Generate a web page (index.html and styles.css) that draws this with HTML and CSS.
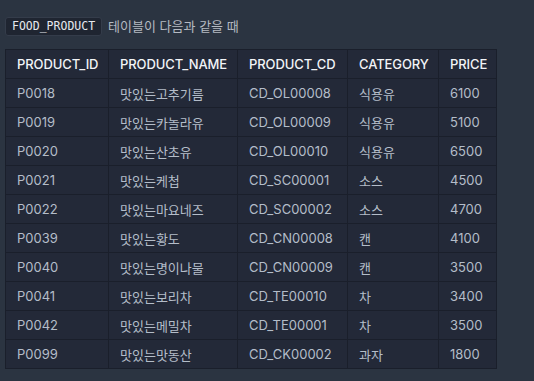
FILE: index.html
```html
<!DOCTYPE html>
<html lang="ko">
<head>
<meta charset="utf-8">
<link rel="stylesheet" href="styles.css">
</head>
<body>
<div class="page">
  <p class="intro"><code class="chip">FOOD_PRODUCT</code> 테이블이 다음과 같을 때</p>
  <table class="grid">
    <colgroup>
      <col class="c-id"><col class="c-name"><col class="c-cd"><col class="c-cat"><col class="c-price">
    </colgroup>
    <thead>
      <tr><th>PRODUCT_ID</th><th>PRODUCT_NAME</th><th>PRODUCT_CD</th><th>CATEGORY</th><th>PRICE</th></tr>
    </thead>
    <tbody>
      <tr><td>P0018</td><td>맛있는고추기름</td><td>CD_OL00008</td><td>식용유</td><td>6100</td></tr>
      <tr><td>P0019</td><td>맛있는카놀라유</td><td>CD_OL00009</td><td>식용유</td><td>5100</td></tr>
      <tr><td>P0020</td><td>맛있는산초유</td><td>CD_OL00010</td><td>식용유</td><td>6500</td></tr>
      <tr><td>P0021</td><td>맛있는케첩</td><td>CD_SC00001</td><td>소스</td><td>4500</td></tr>
      <tr><td>P0022</td><td>맛있는마요네즈</td><td>CD_SC00002</td><td>소스</td><td>4700</td></tr>
      <tr><td>P0039</td><td>맛있는황도</td><td>CD_CN00008</td><td>캔</td><td>4100</td></tr>
      <tr><td>P0040</td><td>맛있는명이나물</td><td>CD_CN00009</td><td>캔</td><td>3500</td></tr>
      <tr><td>P0041</td><td>맛있는보리차</td><td>CD_TE00010</td><td>차</td><td>3400</td></tr>
      <tr><td>P0042</td><td>맛있는메밀차</td><td>CD_TE00001</td><td>차</td><td>3500</td></tr>
      <tr><td>P0099</td><td>맛있는맛동산</td><td>CD_CK00002</td><td>과자</td><td>1800</td></tr>
    </tbody>
  </table>
</div>
</body>
</html>
```
FILE: styles.css
```css
html, body {
  margin: 0;
  padding: 0;
  background: #2b3441;
}
.page {
  padding: 16px 5px 0 5px;
  font-family: Inter, "Noto Sans CJK KR", sans-serif;
  color: #c3c8d0;
}
.intro {
  margin: 0 0 13px 0;
  font-size: 13px;
  line-height: 20px;
  color: #b5bac2;
  display: flex;
  align-items: center;
  gap: 6px;
}
.chip {
  font-family: "DejaVu Sans Mono", monospace;
  font-size: 11.5px;
  color: #e6e9ee;
  background: #1f2531;
  border: 1px solid #343c4a;
  border-radius: 3px;
  padding: 0 6px;
  line-height: 17px;
}
.grid {
  border-collapse: collapse;
  table-layout: fixed;
  width: 491px;
  background: #232938;
  font-size: 13px;
}
.c-id { width: 103px; }
.c-name { width: 129px; }
.c-cd { width: 110px; }
.c-cat { width: 91px; }
.c-price { width: 58px; }
.grid th, .grid td {
  border: 1px solid #1a1f2b;
  text-align: left;
  padding: 0 6px 0 11px;
  height: 28px;
  white-space: nowrap;
  overflow: hidden;
}
.grid th {
  color: #f2f4f7;
  font-weight: 500;
  letter-spacing: -0.1px;
}
.grid td {
  color: #b4bdc9;
}
```
